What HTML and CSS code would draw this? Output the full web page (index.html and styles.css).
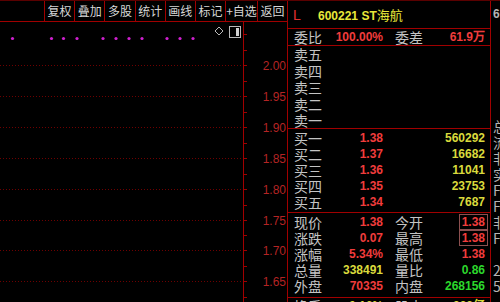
FILE: index.html
```html
<!DOCTYPE html>
<html lang="zh-CN">
<head>
    <meta charset="UTF-8">
    <title>600221 ST海航</title>
    <link rel="stylesheet" href="styles.css">
</head>
<body>
<div class="app">
    <div class="left">
        <div class="toolbar">
            <div class="tools">
                <span class="tool">复权</span>
                <span class="tool">叠加</span>
                <span class="tool">多股</span>
                <span class="tool">统计</span>
                <span class="tool">画线</span>
                <span class="tool">标记</span>
                <span class="tool">+自选</span>
                <span class="tool">返回</span>
            </div>
        </div>
        <!-- 分时图画布 -->
        <svg class="chart" width="287" height="280" viewBox="0 0 287 280">
            <g class="grid" stroke="#6e0000" stroke-dasharray="1 2">
                <line x1="0" y1="43.5" x2="243" y2="43.5"/>
                <line x1="0" y1="74.5" x2="243" y2="74.5"/>
                <line x1="0" y1="105.5" x2="243" y2="105.5"/>
                <line x1="0" y1="136.5" x2="243" y2="136.5"/>
                <line x1="0" y1="167.5" x2="243" y2="167.5"/>
                <line x1="0" y1="198.5" x2="243" y2="198.5"/>
                <line x1="0" y1="228.5" x2="243" y2="228.5"/>
                <line x1="0" y1="259.5" x2="243" y2="259.5"/>
            </g>
            <line x1="243.5" y1="0" x2="243.5" y2="280" stroke="#a00000"/>
            <g stroke="#a00000">
                <line x1="243" y1="12.5" x2="247" y2="12.5"/>
                <line x1="243" y1="28.5" x2="247" y2="28.5"/>
                <line x1="243" y1="43.5" x2="247" y2="43.5"/>
                <line x1="243" y1="59.5" x2="247" y2="59.5"/>
                <line x1="243" y1="74.5" x2="247" y2="74.5"/>
                <line x1="243" y1="90.5" x2="247" y2="90.5"/>
                <line x1="243" y1="105.5" x2="247" y2="105.5"/>
                <line x1="243" y1="121.5" x2="247" y2="121.5"/>
                <line x1="243" y1="136.5" x2="247" y2="136.5"/>
                <line x1="243" y1="152.5" x2="247" y2="152.5"/>
                <line x1="243" y1="167.5" x2="247" y2="167.5"/>
                <line x1="243" y1="183.5" x2="247" y2="183.5"/>
                <line x1="243" y1="198.5" x2="247" y2="198.5"/>
                <line x1="243" y1="213.5" x2="247" y2="213.5"/>
                <line x1="243" y1="228.5" x2="247" y2="228.5"/>
                <line x1="243" y1="244.5" x2="247" y2="244.5"/>
                <line x1="243" y1="259.5" x2="247" y2="259.5"/>
                <line x1="243" y1="275.5" x2="247" y2="275.5"/>
            </g>
            <g class="axis" text-anchor="end">
                <text x="286" y="48">2.00</text>
                <text x="286" y="79">1.95</text>
                <text x="286" y="110">1.90</text>
                <text x="286" y="141">1.85</text>
                <text x="286" y="172">1.80</text>
                <text x="286" y="203">1.75</text>
                <text x="286" y="233">1.70</text>
                <text x="286" y="264">1.65</text>
            </g>
            <g fill="#d020d0">
                <circle cx="12.5" cy="16.5" r="1.6"/>
                <circle cx="51.5" cy="16.5" r="1.6"/>
                <circle cx="63.5" cy="16.5" r="1.6"/>
                <circle cx="77" cy="16.5" r="1.6"/>
                <circle cx="103" cy="16.5" r="1.6"/>
                <circle cx="116" cy="16.5" r="1.6"/>
                <circle cx="129" cy="16.5" r="1.6"/>
                <circle cx="142" cy="16.5" r="1.6"/>
                <circle cx="167" cy="16.5" r="1.6"/>
                <circle cx="180" cy="16.5" r="1.6"/>
                <circle cx="193" cy="16.5" r="1.6"/>
            </g>
            <polygon points="219,5 223,9 219,13 215,9" fill="none" stroke="#b8b8b8"/>
            <rect x="229.5" y="4.5" width="11" height="11" fill="none" stroke="#b8b8b8"/>
            <rect x="236" y="6" width="3" height="8" fill="#d0d0d0"/>
        </svg>
    </div>

    <div class="quote">
        <div class="title">
            <span class="market">L</span>
            <span class="name">600221 ST<span class="cn">海航</span></span>
        </div>
        <div class="sec ratio">
            <div class="row">
                <span class="lbl">委比</span><span class="num red">100.00%</span>
                <span class="lbl2">委差</span><span class="val red">61.9万</span>
            </div>
        </div>
        <div class="sec sell">
            <div class="row"><span class="lbl">卖五</span></div>
            <div class="row"><span class="lbl">卖四</span></div>
            <div class="row"><span class="lbl">卖三</span></div>
            <div class="row"><span class="lbl">卖二</span></div>
            <div class="row"><span class="lbl">卖一</span></div>
        </div>
        <div class="sec buy">
            <div class="row"><span class="lbl">买一</span><span class="num red">1.38</span><span class="vol yellow">560292</span></div>
            <div class="row"><span class="lbl">买二</span><span class="num red">1.37</span><span class="vol yellow">16682</span></div>
            <div class="row"><span class="lbl">买三</span><span class="num red">1.36</span><span class="vol yellow">11041</span></div>
            <div class="row"><span class="lbl">买四</span><span class="num red">1.35</span><span class="vol yellow">23753</span></div>
            <div class="row"><span class="lbl">买五</span><span class="num red">1.34</span><span class="vol yellow">7687</span></div>
        </div>
        <div class="sec stats">
            <div class="row">
                <span class="lbl">现价</span><span class="num red">1.38</span>
                <span class="lbl2">今开</span><span class="val red"><span class="box">1.38</span></span>
            </div>
            <div class="row">
                <span class="lbl">涨跌</span><span class="num red">0.07</span>
                <span class="lbl2">最高</span><span class="val red"><span class="box">1.38</span></span>
            </div>
            <div class="row">
                <span class="lbl">涨幅</span><span class="num red">5.34%</span>
                <span class="lbl2">最低</span><span class="val red">1.38</span>
            </div>
            <div class="row">
                <span class="lbl">总量</span><span class="num yellow">338491</span>
                <span class="lbl2">量比</span><span class="val green">0.86</span>
            </div>
            <div class="row">
                <span class="lbl">外盘</span><span class="num red">70335</span>
                <span class="lbl2">内盘</span><span class="val green">268156</span>
            </div>
        </div>
        <div class="sec more">
            <div class="row">
                <span class="lbl">换手</span><span class="num yellow">0.16%</span>
                <span class="lbl2">股本</span><span class="val yellow">333亿</span>
            </div>
        </div>
    </div>

    <div class="extra">
        <div class="code">600221</div>
        <div class="info">
            <div>总</div><div>流</div><div>非</div><div>实</div>
            <div>F</div><div>F</div><div>非</div><div>F</div>
            <div>&nbsp;</div><div>2</div><div>5</div>
        </div>
    </div>
</div>
</body>
</html>
```

FILE: styles.css
```css
*{
    margin: 0;
    padding: 0;
    box-sizing: border-box;
}
body{
    background-color: #000;
    width: 500px;
    height: 302px;
    overflow: hidden;
    font-family: "Noto Sans CJK SC", "Liberation Sans", sans-serif;
    color: #c4c4c4;
}
.app{
    display: flex;
    height: 302px;
    border-top: 1px solid #5a0000;
    overflow: hidden;
}

/* 左边 分时图 */
.left{
    width: 288px;
    border-right: 1px solid #a00000;
    display: flex;
    flex-direction: column;
}
.toolbar{
    height: 21px;
    flex-shrink: 0;
    border-bottom: 1px solid #a00000;
    display: flex;
    justify-content: flex-end;
}
.tools{
    width: 243px;
    display: flex;
}
.tool{
    flex: 1;
    border-left: 1px solid #a00000;
    font-size: 12px;
    line-height: 19px;
    text-align: center;
    color: #d6d6d6;
    white-space: nowrap;
}
.chart{
    display: block;
    flex-shrink: 0;
}
.axis{
    font-family: "Liberation Sans", sans-serif;
    font-size: 12px;
    fill: #b42424;
}

/* 右边 报价 */
.quote{
    width: 203px;
    border-right: 1px solid #a00000;
    display: flex;
    flex-direction: column;
    overflow: hidden;
}
.title{
    height: 28px;
    flex-shrink: 0;
    border-bottom: 1px solid #a00000;
    display: flex;
    align-items: center;
    padding-left: 5px;
}
.market{
    color: #e03030;
    font-family: "Liberation Sans", sans-serif;
    font-size: 14px;
    width: 25px;
}
.name{
    color: #e8e83a;
    font-family: "Liberation Sans", sans-serif;
    font-weight: bold;
    font-size: 12px;
}
.name .cn{
    font-family: "Noto Sans CJK SC", sans-serif;
    font-weight: normal;
    font-size: 13px;
}
.sec{
    flex-shrink: 0;
    border-bottom: 1px solid #a00000;
    padding: 0 4px 0 6px;
}
.ratio{
    height: 17px;
}
.sell{
    height: 83px;
    padding-top: 0;
}
.buy{
    height: 84px;
    padding-top: 1px;
}
.stats{
    height: 85px;
    padding-top: 1px;
}
.more{
    border-bottom: none;
}
.row{
    display: grid;
    grid-template-columns: 40px 49px 12px 30px 60px;
    height: 16px;
    line-height: 16px;
    white-space: nowrap;
}
.sell .row{
    height: 16.5px;
}
.lbl, .lbl2{
    font-size: 14px;
    color: #c4c4c4;
}
.lbl2{
    grid-column: 4;
}
.num, .val, .vol{
    font-family: "Liberation Sans", sans-serif;
    font-weight: bold;
    font-size: 12px;
    text-align: right;
}
.num{
    grid-column: 2;
}
.val{
    grid-column: 5;
}
.vol{
    grid-column: 3 / 6;
}
.box{
    display: inline-block;
    border: 1px solid #8c5050;
    line-height: 14px;
    padding: 0 2px;
    margin-right: -3px;
}
.red{
    color: #f03c3c;
}
.yellow{
    color: #dada3c;
}
.green{
    color: #2cd82c;
}

/* 最右 被截掉的一栏 */
.extra{
    flex: 1;
    overflow: hidden;
    white-space: nowrap;
    font-size: 14px;
    color: #b4b4b4;
    padding-left: 2px;
}
.code{
    font-family: "Liberation Sans", sans-serif;
    font-weight: bold;
    font-size: 12px;
    line-height: 24px;
    padding-top: 1px;
}
.info{
    margin-top: 92px;
    line-height: 16px;
}
```
